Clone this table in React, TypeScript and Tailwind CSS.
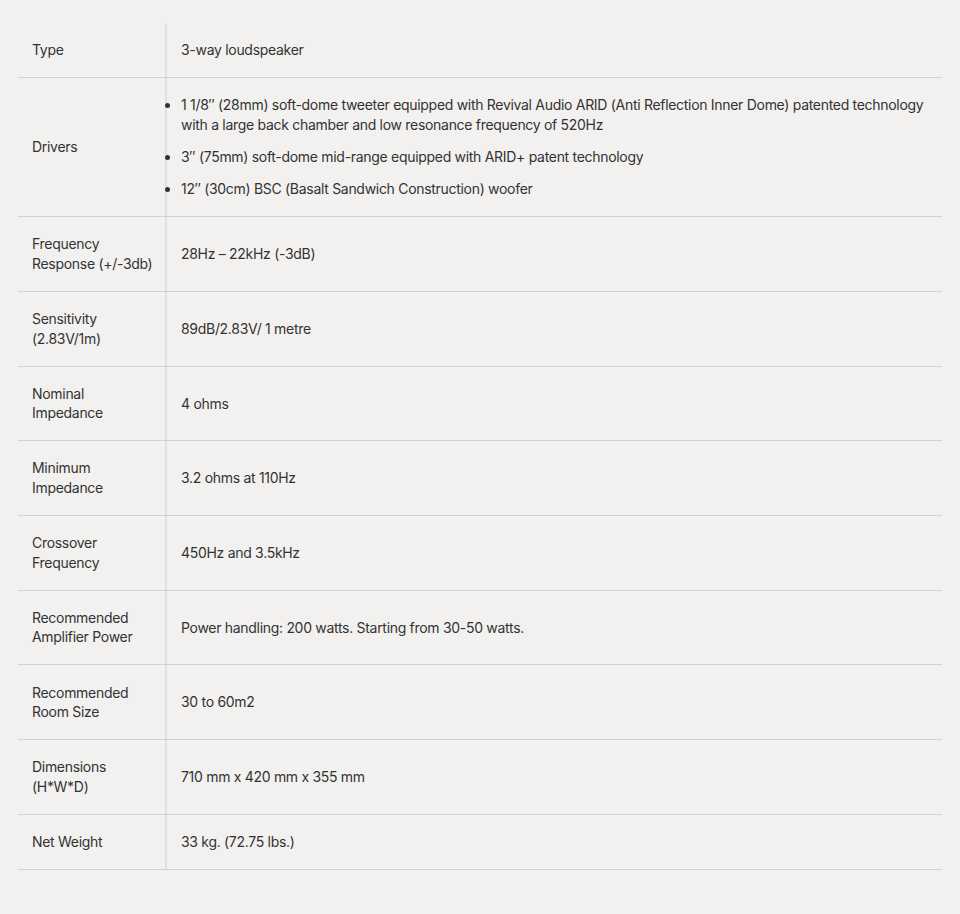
const specs: { label: string[]; value: string | string[] }[] = [
  { label: ["Type"], value: "3-way loudspeaker" },
  {
    label: ["Drivers"],
    value: [
      "1 1/8″ (28mm) soft-dome tweeter equipped with Revival Audio ARID (Anti Reflection Inner Dome) patented technology with a large back chamber and low resonance frequency of 520Hz",
      "3″ (75mm) soft-dome mid-range equipped with ARID+ patent technology",
      "12″ (30cm) BSC (Basalt Sandwich Construction) woofer",
    ],
  },
  { label: ["Frequency", "Response (+/-3db)"], value: "28Hz – 22kHz (-3dB)" },
  { label: ["Sensitivity", "(2.83V/1m)"], value: "89dB/2.83V/ 1 metre" },
  { label: ["Nominal", "Impedance"], value: "4 ohms" },
  { label: ["Minimum", "Impedance"], value: "3.2 ohms at 110Hz" },
  { label: ["Crossover", "Frequency"], value: "450Hz and 3.5kHz" },
  { label: ["Recommended", "Amplifier Power"], value: "Power handling: 200 watts. Starting from 30-50 watts." },
  { label: ["Recommended", "Room Size"], value: "30 to 60m2" },
  { label: ["Dimensions", "(H*W*D)"], value: "710 mm x 420 mm x 355 mm" },
  { label: ["Net Weight"], value: "33 kg. (72.75 lbs.)" },
];

export default function App() {
  return (
    <div className="min-h-[914px] bg-[#f2f1ef] pt-[23px] pl-[18px] pr-[18px] font-['Inter',sans-serif] text-[14px] leading-[19.6px] tracking-[-0.3px] text-[#333333]">
      <div className="flex flex-col">
        {specs.map((row) => (
          <div key={row.label.join(" ")} className="grid grid-cols-[147px_1fr] border-b border-[#d2d1cf]">
            <div className="flex flex-col justify-center py-[17.25px] pl-[14px] pr-1 whitespace-nowrap">
              {row.label.map((line) => (
                <span key={line}>{line}</span>
              ))}
            </div>
            <div className="flex items-center border-l-2 border-[#e1e0de] py-[17.25px] pl-[14px] pr-4">
              {Array.isArray(row.value) ? (
                <ul className="list-disc space-y-[12.6px] pl-0">
                  {row.value.map((item) => (
                    <li key={item}>{item}</li>
                  ))}
                </ul>
              ) : (
                <span>{row.value}</span>
              )}
            </div>
          </div>
        ))}
      </div>
    </div>
  );
}
